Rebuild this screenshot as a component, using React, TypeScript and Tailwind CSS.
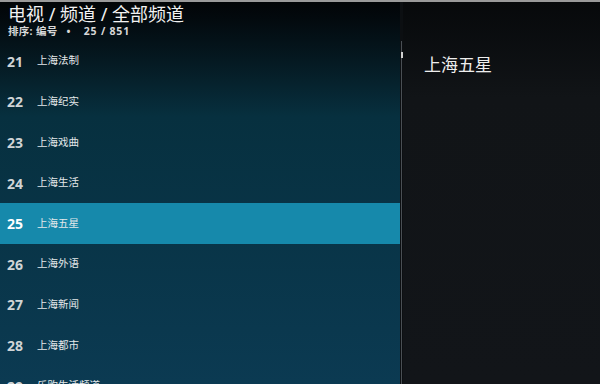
const channels = [
  { num: 21, name: '上海法制' },
  { num: 22, name: '上海纪实' },
  { num: 23, name: '上海戏曲' },
  { num: 24, name: '上海生活' },
  { num: 25, name: '上海五星' },
  { num: 26, name: '上海外语' },
  { num: 27, name: '上海新闻' },
  { num: 28, name: '上海都市' },
  { num: 29, name: '乐购生活频道' },
];

const font = { fontFamily: '"Noto Sans", "Noto Sans CJK SC", sans-serif' };

export default function App() {
  return (
    <div
      className="w-[600px] h-[384px] overflow-hidden flex flex-col bg-black text-white"
      style={font}
    >
      <div className="h-[2px] shrink-0 bg-[#9a9a9a]" />
      <div className="flex flex-1 min-h-0">
        {/* channel list */}
        <div className="w-[400px] overflow-hidden flex flex-col bg-gradient-to-b from-[#020507] via-[#07303f] via-30% to-[#0b3a52]">
          <div className="h-[39px] shrink-0 pl-[8px] flex flex-col">
            <div className="text-[18px] leading-[21px] mt-[2px] text-[#f2f2f2]">
              电视 / 频道 / 全部频道
            </div>
            <div className="flex items-center gap-[9px] text-[10.5px] leading-[12px] font-bold text-[#d8d8d8] tracking-[0.3px]">
              <span>排序: 编号</span>
              <span>•</span>
              <span className="ml-[4px] tracking-[0.8px]">25 / 851</span>
            </div>
          </div>
          <div className="flex flex-col">
            {channels.map((c) => (
              <div
                key={c.num}
                className={
                  'h-[40.6px] shrink-0 flex items-center pl-[7px] ' +
                  (c.num === 25 ? 'bg-[#1689ab]' : '')
                }
              >
                <span
                  className={
                    'w-[30px] text-[14px] font-bold ' +
                    (c.num === 25 ? 'text-white' : 'text-[#cfd4d6]')
                  }
                >
                  {c.num}
                </span>
                <span className="text-[10.5px] text-[#e4e8ea]">{c.name}</span>
              </div>
            ))}
          </div>
        </div>
        {/* scrollbar */}
        <div className="w-[3px] bg-[#0c0f12] flex flex-col">
          <div className="h-[39px] shrink-0" />
          <div className="flex-1 w-[1px] mx-auto bg-[#4a4f54] relative">
            <div className="absolute left-[-0.5px] top-[11px] w-[2px] h-[6px] bg-[#d0d0d0]" />
          </div>
        </div>
        {/* info panel */}
        <div className="flex-1 bg-gradient-to-b from-[#07090b] via-[#111417] via-25% to-[#121519] pl-[21px] pt-[52px]">
          <div className="text-[17px] leading-[22px] text-[#eeeeee]">上海五星</div>
        </div>
      </div>
    </div>
  );
}
